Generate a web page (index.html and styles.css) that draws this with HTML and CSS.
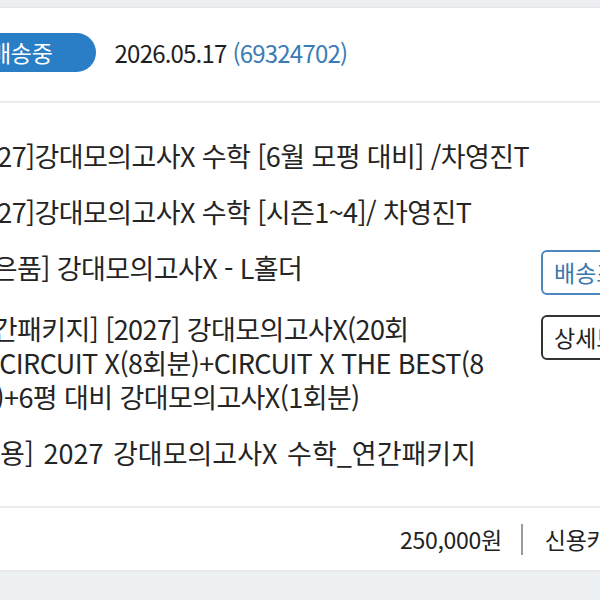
FILE: index.html
```html
<!DOCTYPE html>
<html lang="ko">
<head>
<meta charset="utf-8">
<link rel="stylesheet" href="styles.css">
</head>
<body>
<div class="top-strip"></div>
<section class="order-card">
  <header class="order-head">
    <span class="badge">배송중</span>
    <span class="order-date">2026.05.17 <span class="order-no">(69324702)</span></span>
  </header>
  <div class="order-body">
    <ul class="items">
      <li class="item">[2027]강대모의고사X 수학 [6월 모평 대비] /차영진T</li>
      <li class="item">[2027]강대모의고사X 수학 [시즌1~4]/ 차영진T</li>
      <li class="item">[사은품] 강대모의고사X - L홀더</li>
      <li class="item item-multi">
        <span class="line">[연간패키지] [2027] 강대모의고사X(20회</span>
        <span class="line line-2">분)+CIRCUIT X(8회분)+CIRCUIT X THE BEST(8</span>
        <span class="line line-3">회분)+6평 대비 강대모의고사X(1회분)</span>
      </li>
      <li class="item item-last">[이용] 2027 강대모의고사X 수학_연간패키지</li>
    </ul>
    <div class="actions">
      <button class="btn btn-track">배송조회</button>
      <button class="btn btn-detail">상세보기</button>
    </div>
  </div>
  <footer class="order-foot">
    <span class="price">250,000원</span>
    <span class="sep"></span>
    <span class="method">신용카드</span>
  </footer>
</section>
</body>
</html>
```
FILE: styles.css
```css
html, body {
  margin: 0;
  padding: 0;
}
body {
  width: 600px;
  height: 600px;
  overflow: hidden;
  background: #eef1f4;
  font-family: "Noto Sans CJK KR", "Noto Sans", sans-serif;
  color: #222;
}
.top-strip {
  height: 7px;
  background: #eceef1;
}
.order-card {
  width: 760px;
  margin-left: -53px;
  background: #fff;
  border-top: 1px solid #e2e4e7;
  border-bottom: 2px solid #e6e8eb;
}
.order-head {
  display: flex;
  align-items: center;
  gap: 19px;
  height: 95px;
  box-sizing: border-box;
  border-bottom: 2px solid #ebebeb;
}
.badge {
  display: inline-block;
  height: 39px;
  line-height: 39px;
  padding: 0 43px;
  border-radius: 20px;
  background: #2a7ec6;
  color: #fff;
  font-size: 23px;
  letter-spacing: -0.3px;
  margin-top: -4px;
}
.order-date {
  font-size: 24px;
  letter-spacing: -0.8px;
  color: #1e1e1e;
  margin-top: -4px;
}
.order-no {
  color: #3b7cb6;
}
.order-body {
  display: grid;
  grid-template-columns: 581px 1fr;
  height: 405px;
  box-sizing: border-box;
  border-bottom: 2px solid #ebebeb;
  padding-left: 13px;
}
.items {
  list-style: none;
  margin: 0;
  padding: 0;
  display: flex;
  flex-direction: column;
  justify-content: center;
  gap: 22px;
  font-size: 27px;
  letter-spacing: -0.6px;
  line-height: 34px;
  white-space: nowrap;
  color: #242424;
}
.item-multi {
  margin-top: 5px;
  display: flex;
  flex-direction: column;
}
.line-2 {
  margin-left: -8px;
}
.line-3 {
  margin-left: -13px;
}
.item-last {
  margin-left: 6px;
  letter-spacing: 0;
  word-spacing: 2px;
}
.actions {
  display: flex;
  flex-direction: column;
  justify-content: center;
  gap: 20px;
}
.btn {
  width: 130px;
  height: 45px;
  border-radius: 6px;
  background: #fff;
  font-family: inherit;
  font-size: 23px;
  text-align: left;
  padding: 0 11px;
  box-sizing: border-box;
  white-space: nowrap;
}
.btn-track {
  border: 2px solid #4b88bf;
  color: #3a77ad;
}
.btn-detail {
  border: 2px solid #333;
  color: #222;
}
.order-foot {
  display: flex;
  align-items: center;
  height: 62px;
  padding-left: 453px;
  font-size: 23px;
  letter-spacing: -0.3px;
  color: #222;
}
.sep {
  width: 2px;
  height: 31px;
  background: #9a9a9a;
  margin: 0 22px 0 19px;
}
```
